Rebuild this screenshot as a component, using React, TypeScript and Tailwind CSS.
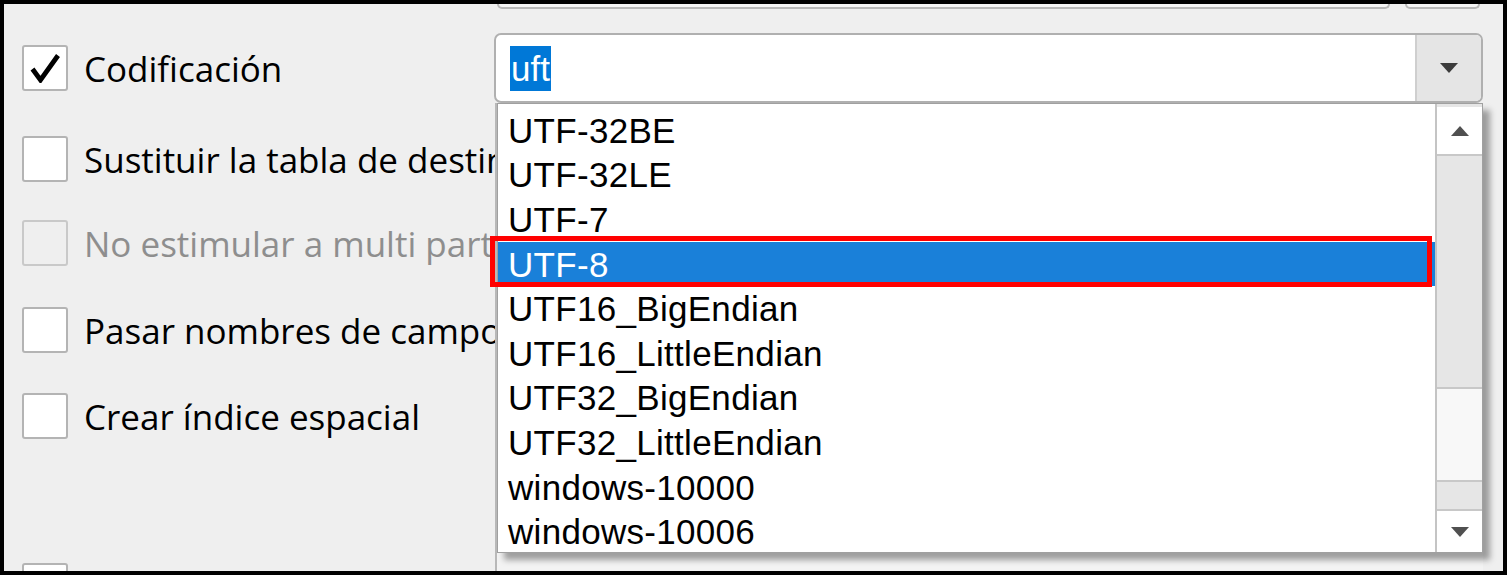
import React from 'react';

const encodings = [
  'UTF-32BE',
  'UTF-32LE',
  'UTF-7',
  'UTF-8',
  'UTF16_BigEndian',
  'UTF16_LittleEndian',
  'UTF32_BigEndian',
  'UTF32_LittleEndian',
  'windows-10000',
  'windows-10006',
];

const Check: React.FC<{ checked?: boolean; disabled?: boolean }> = ({ checked, disabled }) => (
  <div
    className={`w-[46px] h-[46px] shrink-0 rounded-[3px] border-2 flex items-center justify-center ${
      disabled ? 'bg-[#efefef] border-[#c9c9c9]' : 'bg-white border-[#b4b4b4]'
    }`}
  >
    {checked && (
      <svg width="30" height="30" viewBox="0 0 30 30">
        <path d="M2.5 16 L10.5 27 L28 2.5" fill="none" stroke="#000" strokeWidth="4.8" strokeLinejoin="miter" />
      </svg>
    )}
  </div>
);

const Row: React.FC<{ label: string; checked?: boolean; disabled?: boolean; className?: string }> = ({
  label,
  checked,
  disabled,
  className,
}) => (
  <div className={`flex items-center h-[46px] gap-[16px] whitespace-nowrap ${className ?? ''}`}>
    <Check checked={checked} disabled={disabled} />
    <span className={`text-[35px] leading-none ${disabled ? 'text-[#8e8e8e]' : 'text-black'}`}>{label}</span>
  </div>
);

const Tri: React.FC<{ up?: boolean; color?: string }> = ({ up, color = '#505050' }) => (
  <svg width="18" height="10" viewBox="0 0 18 10">
    <path d={up ? 'M0 10 L9 0 L18 10 Z' : 'M0 0 L18 0 L9 10 Z'} fill={color} />
  </svg>
);

export default function App() {
  return (
    <div
      className="relative w-[1507px] h-[575px] overflow-hidden border-4 border-black bg-[#efefef] flex"
      style={{ fontFamily: '"Open Sans", sans-serif' }}
    >
      {/* left column: check boxes */}
      <div className="w-[490px] shrink-0 pl-[18px] pt-[41px] flex flex-col">
        <Row label="Codificación" checked />
        <Row label="Sustituir la tabla de destino" className="mt-[45px]" />
        <Row label="No estimular a multi partes" disabled className="mt-[38px]" />
        <Row label="Pasar nombres de campo" className="mt-[41px]" />
        <Row label="Crear índice espacial" className="mt-[40px]" />
        <Row label="" className="mt-[124px]" />
      </div>

      {/* right column: inputs */}
      <div className="w-[991px] shrink-0 flex flex-col">
        <div className="flex h-[5px] gap-[15px]">
          <div className="ml-[3px] w-[893px] h-[5px] border-2 border-t-0 border-[#b8b8b8] rounded-b-[6px] bg-[#f5f5f5]" />
          <div className="w-[75px] h-[5px] border-2 border-t-0 border-[#b8b8b8] rounded-b-[6px] bg-[#f5f5f5]" />
        </div>

        <div className="mt-[24px] h-[70px] w-[989px] border-2 border-[#b0b0b0] rounded-[7px] bg-white flex overflow-hidden">
          <div className="flex-1 flex items-center pl-[14px]">
            <span
              className="bg-[#0078d7] text-white text-[35px] leading-[45px] h-[45px] px-[1px]"
              style={{ fontFamily: '"Liberation Sans", Arial, sans-serif' }}
            >
              uft
            </span>
          </div>
          <div className="w-[66px] border-l-2 border-[#cfcfcf] bg-[#e5e5e5] flex items-center justify-center">
            <Tri color="#3c3c3c" />
          </div>
        </div>

        <div className="flex-1 ml-[1px] w-[988px] border-l-2 border-[#b8b8b8] bg-[#f3f3f3]" />
      </div>

      {/* drop-down list */}
      <div
        className="absolute left-[493px] top-[99px] w-[986px] h-[450px] bg-white border border-[#a0a0a0] flex shadow-[7px_7px_6px_rgba(0,0,0,0.35)]"
        style={{ fontFamily: '"Liberation Sans", Arial, sans-serif' }}
      >
        <div className="flex-1 pt-[4px] overflow-hidden">
          {encodings.map((e) => (
            <div
              key={e}
              className={`h-[44.6px] flex items-center pl-[10px] text-[35px] tracking-[0.3px] leading-none ${
                e === 'UTF-8' ? 'bg-[#1a80d9] text-white' : 'text-black'
              }`}
            >
              {e}
            </div>
          ))}
        </div>
        <div className="w-[47px] border-l-2 border-[#c4c4c4] flex flex-col bg-[#e6e6e6]">
          <div className="h-[49px] mt-[3px] bg-white border-b-2 border-[#c8c8c8] flex items-center justify-center">
            <Tri up />
          </div>
          <div className="h-[231px] bg-[#e6e6e6]" />
          <div className="h-[95px] bg-[#f8f8f8] border-y-2 border-[#c8c8c8]" />
          <div className="h-[27px] bg-[#e6e6e6]" />
          <div className="flex-1 bg-white border-t-2 border-[#c8c8c8] flex items-center justify-center">
            <Tri />
          </div>
        </div>
      </div>

      {/* annotation frame */}
      <div className="absolute left-[486px] top-[232px] w-[942px] h-[51px] border-[5px] border-[#ff0000]" />
    </div>
  );
}
